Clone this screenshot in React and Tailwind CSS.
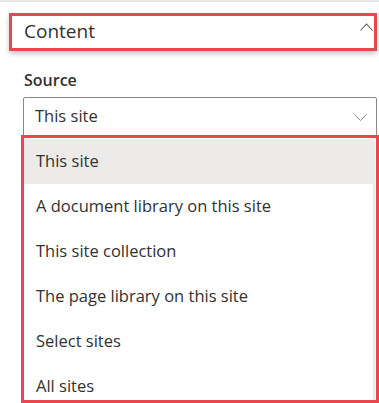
const items = [
  "This site",
  "A document library on this site",
  "This site collection",
  "The page library on this site",
  "Select sites",
  "All sites",
];

function ChevronUp() {
  return (
    <svg width="13" height="8" viewBox="0 0 13 8" fill="none">
      <polyline points="0.5,7.5 6.5,1 12.5,7.5" stroke="#605e5c" strokeWidth="1.1" />
    </svg>
  );
}

function ChevronDown() {
  return (
    <svg width="13" height="7" viewBox="0 0 13 7" fill="none">
      <polyline points="0.5,0.5 6.5,6.5 12.5,0.5" stroke="#8a8886" strokeWidth="1" />
    </svg>
  );
}

export default function App() {
  return (
    <div
      className="w-[379px] h-[403px] overflow-hidden bg-white text-[#323130]"
      style={{ fontFamily: '"Open Sans", "Noto Sans", sans-serif' }}
    >
      <div className="h-[2px] bg-[#e9e7e5]" />

      {/* section header */}
      <div className="mt-[11px] ml-[9px] w-[368px] h-[38px] border-[3px] border-[#e8484d] shadow-[0_3px_5px_rgba(0,0,0,0.22)] flex items-center justify-between pl-[12px] pr-[1px]">
        <span className="text-[19px] leading-none -mt-[1px]">Content</span>
        <span className="-mt-[10px]">
          <ChevronUp />
        </span>
      </div>

      <div className="mt-[19px] ml-[24px] text-[16px] leading-[20px] font-semibold">Source</div>

      <div className="mt-[7px] ml-[23px] w-[354px] h-[40px] border border-[#8a8886] rounded-[2px] flex items-center justify-between pl-[11px] pr-[9px]">
        <span className="text-[16.5px] leading-none -mt-[2px]">This site</span>
        <ChevronDown />
      </div>

      {/* dropdown list */}
      <div className="-mt-[2px] ml-[21px] w-[358px] h-[268px] border-[3px] border-[#e8484d] overflow-hidden">
        <div className="mr-[3px] pt-[1px] shadow-[0_0_6px_rgba(0,0,0,0.2)]">
          {items.map((label, i) => (
            <div
              key={label}
              className={`h-[45px] flex items-center pl-[12px] text-[16.5px] leading-none ${
                i === 0 ? "bg-[#edebe9]" : "bg-white"
              }`}
            >
              {label}
            </div>
          ))}
        </div>
      </div>
    </div>
  );
}
